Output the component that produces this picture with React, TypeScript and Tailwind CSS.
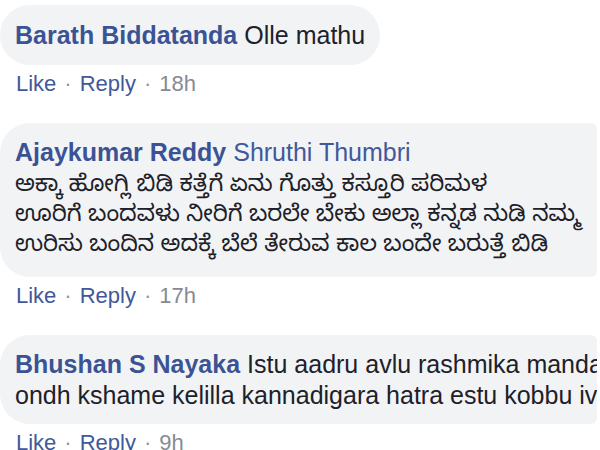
import React from "react";

interface ActionsProps {
	time: string;
}

const Actions = ({ time }: ActionsProps) => (
	<div className="mt-[6px] flex h-[26px] items-center pl-[16px] text-[22px] leading-[26px] whitespace-nowrap">
		<span className="text-[#41599a]">Like</span>
		<span className="mx-[8px] text-[#90949c]">·</span>
		<span className="text-[#41599a]">Reply</span>
		<span className="mx-[8px] text-[#90949c]">·</span>
		<span className="text-[#868a93]">{time}</span>
	</div>
);

export default function App() {
	return (
		<div className="h-[450px] w-[600px] overflow-hidden bg-white font-['Liberation_Sans','Noto_Sans_Kannada','Noto_Sans',sans-serif] text-[#1d2129]">
			{/* Comment 1 */}
			<div className="pt-[5px]">
				<div className="inline-flex h-[60px] items-center rounded-[30px] bg-[#f2f3f5] px-[15px] text-[25px] leading-[30px] whitespace-nowrap">
					<span className="font-bold text-[#3b5394]">Barath Biddatanda</span>
					<span className="ml-[7px]">Olle mathu</span>
				</div>
				<Actions time="18h" />
			</div>

			{/* Comment 2 */}
			<div className="mt-[26px]">
				<div className="w-[597px] overflow-hidden rounded-l-[30px] rounded-r-[6px] bg-[#f2f3f5] pt-[13px] pb-[19px] pl-[15px] text-[25px] whitespace-nowrap">
					<div className="h-[32px] leading-[32px]">
						<span className="font-bold text-[#3b5394]">Ajaykumar Reddy</span>
						<span className="ml-[7px] text-[#41599a]">Shruthi Thumbri</span>
					</div>
					<div className="text-[23px]">
						<div className="h-[30px] leading-[30px]">ಅಕ್ಕಾ ಹೋಗ್ಲಿ ಬಿಡಿ ಕತ್ತೆಗೆ ಏನು ಗೊತ್ತು ಕಸ್ತೂರಿ ಪರಿಮಳ</div>
						<div className="h-[30px] leading-[30px]">ಊರಿಗೆ ಬಂದವಳು ನೀರಿಗೆ ಬರಲೇ ಬೇಕು ಅಲ್ಲಾ ಕನ್ನಡ ನುಡಿ ನಮ್ಮ</div>
						<div className="h-[30px] leading-[30px]">ಉರಿಸು ಬಂದಿನ ಅದಕ್ಕೆ ಬೆಲೆ ತೇರುವ ಕಾಲ ಬಂದೇ ಬರುತ್ತೆ ಬಿಡಿ</div>
					</div>
				</div>
				<Actions time="17h" />
			</div>

			{/* Comment 3 */}
			<div className="mt-[26px]">
				<div className="w-[597px] overflow-hidden rounded-l-[30px] rounded-r-[6px] bg-[#f2f3f5] pt-[14px] pb-[13px] pl-[15px] text-[25px] whitespace-nowrap">
					<div className="h-[31px] leading-[31px]">
						<span className="font-bold text-[#3b5394]">Bhushan S Nayaka</span>
						<span className="ml-[7px]">Istu aadru avlu rashmika mandanna</span>
					</div>
					<div className="h-[31px] leading-[31px]">ondh kshame kelilla kannadigara hatra estu kobbu iveg</div>
				</div>
				<Actions time="9h" />
			</div>
		</div>
	);
}
